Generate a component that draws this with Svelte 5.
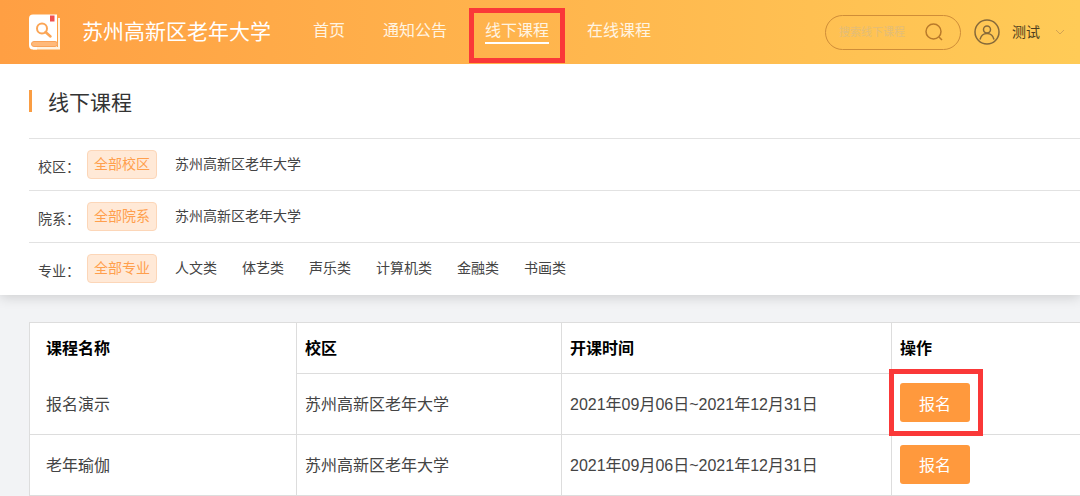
<script lang="ts">
  type Filter = { label: string; options: string[] };
  type Course = { name: string; campus: string; time: string; marked?: boolean };

  const navItems = ["首页", "通知公告", "线下课程", "在线课程"];

  const filters: Filter[] = [
    { label: "校区：", options: ["全部校区", "苏州高新区老年大学"] },
    { label: "院系：", options: ["全部院系", "苏州高新区老年大学"] },
    {
      label: "专业：",
      options: ["全部专业", "人文类", "体艺类", "声乐类", "计算机类", "金融类", "书画类"],
    },
  ];

  const courses: Course[] = [
    {
      name: "报名演示",
      campus: "苏州高新区老年大学",
      time: "2021年09月06日~2021年12月31日",
      marked: true,
    },
    { name: "老年瑜伽", campus: "苏州高新区老年大学", time: "2021年09月06日~2021年12月31日" },
  ];

  let activeNav = $state("线下课程");
  let selected = $state([0, 0, 0]);
  let keyword = $state("");
</script>

<header class="topbar">
  <a class="brand" href="#home">
    <svg width="32" height="36" viewBox="0 0 32 36" aria-hidden="true">
      <path d="M4 4H31V35.500H4Z" fill="#fff3e2" />
      <path d="M28.500 1V33" stroke="#ffa244" stroke-width="1" />
      <path d="M4 .5H28V33H6.500Q3.500 33 3.500 31T6.500 27H28V31H8V35.500H4Q0 35.500 0 31V4.500Q0 .5 4 .5Z" fill="#fff" />
      <rect x="2.500" y="27.500" width="26" height="5" rx="2.500" fill="#ffb97a" stroke="#f9a258" />
      <rect x="21" y="1.500" width="4.500" height="6" fill="#f0504f" />
      <circle cx="13" cy="14.500" r="5" fill="none" stroke="#fba555" stroke-width="2" />
      <path d="M16.500 18L21.500 22.500" stroke="#fba555" stroke-width="2.500" stroke-linecap="round" />
    </svg>
    <span>苏州高新区老年大学</span>
  </a>

  <nav>
    {#each navItems as item (item)}
      <a
        href="#{item}"
        class:active={item === activeNav}
        aria-current={item === activeNav ? "page" : undefined}
        onclick={() => (activeNav = item)}>{item}</a>
    {/each}
  </nav>

  <form class="search" role="search" onsubmit={(e) => e.preventDefault()}>
    <input type="text" aria-label="搜索线下课程" placeholder="搜索线下课程" bind:value={keyword} />
    <button type="submit" aria-label="搜索">
      <svg width="18" height="18" viewBox="0 0 18 18" aria-hidden="true">
        <circle cx="8.500" cy="8.500" r="7.500" />
        <path d="M14 14L17 17" />
      </svg>
    </button>
  </form>

  <button type="button" class="user">
    <svg width="26" height="26" viewBox="0 0 26 26" aria-hidden="true">
      <circle cx="13" cy="13" r="12" />
      <circle cx="13" cy="10.500" r="3.500" />
      <path d="M6 20.500C7 16.500 9.500 14.500 13 14.500S19 16.500 20 20.500" />
    </svg>
    <span>测试</span>
    <svg class="arrow" width="10" height="6" viewBox="0 0 10 6" aria-hidden="true">
      <path d="M1 1L5 5L9 1" />
    </svg>
  </button>
</header>

<section class="panel">
  <h1>线下课程</h1>
  {#each filters as filter, i (filter.label)}
    <div class="filter">
      <span class="label" id="filter-{i}">{filter.label}</span>
      <div class="options" role="group" aria-labelledby="filter-{i}">
        {#each filter.options as option, j (option)}
          <button
            type="button"
            class:chosen={selected[i] === j}
            aria-pressed={selected[i] === j}
            onclick={() => (selected[i] = j)}>{option}</button>
        {/each}
      </div>
    </div>
  {/each}
</section>

<main>
  <table>
    <colgroup>
      <col class="col-name" />
      <col class="col-campus" />
      <col class="col-time" />
      <col />
    </colgroup>
    <thead>
      <tr>
        <th scope="col">课程名称</th>
        <th scope="col" class="ruled">校区</th>
        <th scope="col" class="ruled">开课时间</th>
        <th scope="col">操作</th>
      </tr>
    </thead>
    <tbody>
      {#each courses as course (course.name)}
        <tr>
          <td>{course.name}</td>
          <td>{course.campus}</td>
          <td>{course.time}</td>
          <td>
            <button type="button" class="signup" class:marked={course.marked}>报名</button>
          </td>
        </tr>
      {/each}
    </tbody>
  </table>
</main>

<style>
  :global(body) {
    margin: 0;
    min-height: 100vh;
    background: #f2f3f5;
    color: #444;
    font-family: "Liberation Sans", "Noto Sans CJK SC", sans-serif;
    font-size: 16px;
    overflow: hidden;
  }

  button,
  input {
    font-family: inherit;
    border: none;
    background: none;
    padding: 0;
  }

  button {
    cursor: pointer;
  }

  a {
    color: inherit;
    text-decoration: none;
  }

  svg {
    display: block;
    flex-shrink: 0;
  }

  .topbar {
    position: relative;
    z-index: 1;
    display: flex;
    align-items: center;
    height: 64px;
    padding: 0 15px 0 29px;
    background: linear-gradient(90deg, #ff9f43, #ffcb57);
    color: #fff;
    white-space: nowrap;
  }

  .brand {
    display: flex;
    align-items: center;
    gap: 21px;
    font-size: 21px;
    line-height: 28px;
  }

  nav {
    display: flex;
    gap: 38px;
    margin-left: 42px;
  }

  nav a {
    position: relative;
    line-height: 22px;
    font-size: 16px;
    color: #fff4e2;
    border-bottom: 2px solid transparent;
  }

  nav a.active {
    border-color: #fff;
  }

  nav a.active::after {
    content: "";
    position: absolute;
    inset: -12px -16px -21px;
    border: 5px solid #fa3838;
    pointer-events: none;
  }

  .search {
    display: flex;
    align-items: center;
    box-sizing: border-box;
    width: 136px;
    height: 35px;
    margin-left: auto;
    padding: 0 17px 0 13px;
    border: 1px solid #cf8d38;
    border-radius: 18px;
  }

  .search input {
    flex: 1;
    min-width: 0;
    font-size: 11px;
    color: #6b4d20;
    outline: none;
  }

  .search input::placeholder {
    color: #e3bd78;
    opacity: 1;
  }

  .search svg {
    fill: none;
    stroke: #b97a2b;
    stroke-width: 1.5;
  }

  .user {
    display: flex;
    align-items: center;
    margin-left: 13px;
    font-size: 14px;
    line-height: 20px;
    color: #4d3e20;
  }

  .user span {
    margin: 0 15px 0 12px;
  }

  .user svg {
    fill: none;
    stroke: #86693a;
    stroke-width: 1.5;
  }

  .user .arrow {
    stroke: #d3a352;
    stroke-width: 1;
  }

  .panel {
    position: relative;
    padding: 0 0 1px 29px;
    background: #fff;
    box-shadow: 0 2px 12px rgb(0 0 0 / 0.16);
  }

  h1 {
    display: flex;
    align-items: center;
    gap: 16px;
    height: 74px;
    margin: 0;
    font-size: 21px;
    font-weight: 400;
    color: #333;
  }

  h1::before {
    content: "";
    width: 3px;
    height: 22px;
    background: #fa9d43;
  }

  .filter {
    display: flex;
    align-items: center;
    gap: 7px;
    height: 52px;
    padding-left: 9px;
    border-top: 1px solid #e2e2e2;
    font-size: 14px;
    box-sizing: border-box;
  }

  .label {
    width: 42px;
    padding-top: 2px;
    white-space: nowrap;
  }

  .options {
    display: flex;
    gap: 11px;
  }

  .options button {
    padding: 0 6px;
    border: 1px solid transparent;
    border-radius: 4px;
    font-size: 14px;
    line-height: 27px;
    color: #444;
  }

  .options button.chosen {
    color: #ff9f4d;
    background: #ffe9d7;
    border-color: #fcd6b8;
  }

  main {
    padding: 27px 0 0 29px;
  }

  table {
    width: 100%;
    border-collapse: collapse;
    table-layout: fixed;
    background: #fff;
    border: 1px solid #ddd;
    border-right: none;
  }

  .col-name {
    width: 267px;
  }

  .col-campus {
    width: 265px;
  }

  .col-time {
    width: 330px;
  }

  th,
  td {
    padding: 0 8px 2px;
    border-left: 1px solid #ddd;
    text-align: left;
    white-space: nowrap;
  }

  th:first-child,
  td:first-child {
    padding-left: 16px;
  }

  th {
    height: 48px;
    color: #000;
  }

  th.ruled {
    border-bottom: 1px solid #ddd;
  }

  td {
    height: 58px;
    border-bottom: 1px solid #ddd;
  }

  .signup {
    position: relative;
    display: block;
    width: 70px;
    height: 39px;
    border-radius: 3px;
    background: #ff993d;
    color: #fff;
    font-size: 16px;
  }

  .signup.marked::after {
    content: "";
    position: absolute;
    inset: -14px -13px -14px -11px;
    border: 5px solid #fa3838;
    pointer-events: none;
  }
</style>
